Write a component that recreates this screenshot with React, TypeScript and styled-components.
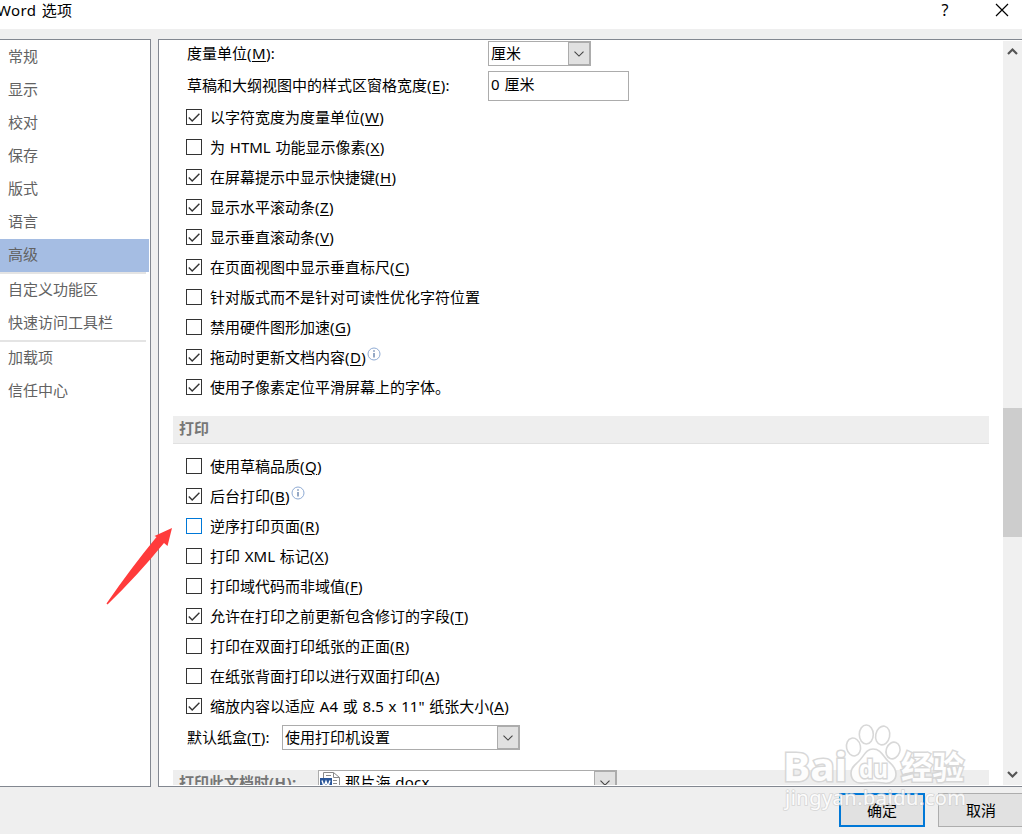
import type { ReactNode } from 'react';
import styled, { createGlobalStyle } from 'styled-components';

const GlobalStyle = createGlobalStyle`
    * {
        box-sizing: border-box;
    }
    body {
        margin: 0;
        overflow: hidden;
        font-family: "Noto Sans", "Noto Sans CJK SC", sans-serif;
        font-size: 15px;
        word-spacing: 0.9px;
        color: #000;
    }
`;

const Dialog = styled.div`
    position: relative;
    display: flex;
    flex-direction: column;
    width: 1022px;
    height: 834px;
    overflow: hidden;
    background-color: #efefef;
`;

const TitleBar = styled.header`
    display: flex;
    align-items: flex-start;
    flex: none;
    height: 29px;
    background-color: #fff;
    h1 {
        flex: 1;
        margin: 0 0 0 -3px;
        font-size: 15px;
        font-weight: 400;
        line-height: 20px;
        letter-spacing: 0.4px;
    }
`;

const TitleButton = styled.button`
    display: flex;
    justify-content: center;
    width: 20px;
    height: 22px;
    padding: 0;
    border: none;
    background: none;
    font: 16px/21px "Noto Sans", sans-serif;
    &:last-child {
        margin: 0 10px 0 37px;
    }
`;

const Body = styled.div`
    display: flex;
    flex: none;
    gap: 7px;
    height: 748px;
    margin-top: 10px;
`;

const Sidebar = styled.nav`
    width: 151px;
    padding-top: 1px;
    border: 1px solid #828790;
    border-left: none;
    background-color: #fff;
`;

const NavItem = styled.div<{ $active?: boolean }>`
    width: 149px;
    height: 33px;
    padding-left: 8px;
    line-height: 31px;
    color: #626262;
    background-color: ${props => props.$active ? '#a5bde3' : 'transparent'};
`;

const NavLine = styled.div`
    width: 146px;
    height: 2px;
    background-color: #e4e4e4;
`;

const Panel = styled.main`
    display: flex;
    flex: 1;
    padding: 1px 0;
    border: 1px solid #828790;
    border-right: none;
    background-color: #fff;
`;

const Content = styled.div`
    flex: 1;
    height: 744px;
    padding: 0 14px;
    overflow: hidden;
`;

const Field = styled.div<{ $height: number; $gap?: number }>`
    display: flex;
    align-items: center;
    height: ${props => props.$height}px;
    margin-top: ${props => props.$gap ?? 0}px;
    padding-left: 14px;
`;

const FieldLabel = styled.label<{ $width: number }>`
    flex: none;
    width: ${props => props.$width}px;
    line-height: 23px;
    padding-bottom: 1px;
    white-space: nowrap;
`;

const Combo = styled.div<{ $width: number }>`
    display: flex;
    flex: none;
    width: ${props => props.$width}px;
    height: 25px;
    border: 1px solid #acacac;
    background-color: #fff;
    font-weight: 400;
    color: #000;
    span {
        flex: 1;
        padding-left: 2px;
        line-height: 23px;
    }
    svg + span {
        padding-left: 4px;
        letter-spacing: 0.3px;
    }
`;

const ComboButton = styled.div`
    display: flex;
    align-items: center;
    justify-content: center;
    width: 22px;
    border: 1px solid #acacac;
    background-color: #e1e1e1;
`;

const TextBox = styled.div`
    width: 141px;
    height: 30px;
    padding-left: 2px;
    border: 1px solid #acacac;
    line-height: 24px;
`;

const CheckRow = styled.label`
    display: flex;
    align-items: center;
    height: 30px;
    padding-left: 13px;
    white-space: nowrap;
`;

const CheckText = styled.span`
    padding-bottom: 2px;
`;

const Box = styled.span<{ $focused?: boolean }>`
    display: block;
    width: 16px;
    height: 16px;
    margin-right: 8px;
    border: 1px solid ${props => props.$focused ? '#0078d7' : '#333'};
    background-color: #fff;
    svg {
        display: block;
    }
`;

const KeyGroup = styled.span`
    letter-spacing: 0.4px;
`;

const Key = styled.span`
    text-decoration: underline;
    text-decoration-thickness: 1px;
    text-underline-offset: 2px;
`;

const InfoIcon = styled.svg`
    margin: -6px 0 0 1px;
`;

const Section = styled.h2<{ $gap: number }>`
    display: flex;
    height: 28px;
    margin: ${props => props.$gap}px 0 0;
    padding-left: 6px;
    border-bottom: 1px solid #e1e1e1;
    background-color: #eee;
    font-size: 15px;
    font-weight: 700;
    line-height: 24px;
    color: #767676;
`;

const SectionLabel = styled.span`
    width: 139px;
`;

const CheckList = styled.div<{ $gap: number }>`
    margin-top: ${props => props.$gap}px;
`;

const Scrollbar = styled.div`
    display: flex;
    flex-direction: column;
    align-items: center;
    width: 19px;
    background-color: #f0f0f0;
    svg {
        flex: none;
    }
`;

const Thumb = styled.div`
    width: 19px;
    height: 129px;
    margin: 347px 0 auto;
    background-color: #cdcdcd;
`;

const Footer = styled.footer`
    display: flex;
    justify-content: flex-end;
    gap: 13px;
    margin: 6px -2px 0 0;
`;

const Button = styled.button<{ $primary?: boolean }>`
    width: 86px;
    height: 34px;
    padding: 0 0 2px;
    border: ${props => props.$primary ? '2px solid #0078d7' : '1px solid #adadad'};
    background-color: #e1e1e1;
    font: inherit;
    color: #000;
`;

const Overlay = styled.svg`
    position: absolute;
    top: 0;
    left: 0;
    pointer-events: none;
    word-spacing: 0;
    text {
        paint-order: stroke;
    }
`;

interface IOption {
    label: string;
    hotkey?: string;
    checked?: boolean;
    focused?: boolean;
    info?: boolean;
}

const navGroups = [
    ['常规', '显示', '校对', '保存', '版式', '语言', '高级'],
    ['自定义功能区', '快速访问工具栏'],
    ['加载项', '信任中心'],
];

const displayOptions: IOption[] = [
    { label: '以字符宽度为度量单位', hotkey: 'W', checked: true },
    { label: '为 HTML 功能显示像素', hotkey: 'X' },
    { label: '在屏幕提示中显示快捷键', hotkey: 'H', checked: true },
    { label: '显示水平滚动条', hotkey: 'Z', checked: true },
    { label: '显示垂直滚动条', hotkey: 'V', checked: true },
    { label: '在页面视图中显示垂直标尺', hotkey: 'C', checked: true },
    { label: '针对版式而不是针对可读性优化字符位置' },
    { label: '禁用硬件图形加速', hotkey: 'G' },
    { label: '拖动时更新文档内容', hotkey: 'D', checked: true, info: true },
    { label: '使用子像素定位平滑屏幕上的字体。', checked: true },
];

const printOptions: IOption[] = [
    { label: '使用草稿品质', hotkey: 'Q' },
    { label: '后台打印', hotkey: 'B', checked: true, info: true },
    { label: '逆序打印页面', hotkey: 'R', focused: true },
    { label: '打印 XML 标记', hotkey: 'X' },
    { label: '打印域代码而非域值', hotkey: 'F' },
    { label: '允许在打印之前更新包含修订的字段', hotkey: 'T', checked: true },
    { label: '打印在双面打印纸张的正面', hotkey: 'R' },
    { label: '在纸张背面打印以进行双面打印', hotkey: 'A' },
    { label: '缩放内容以适应 A4 或 8.5 x 11" 纸张大小', hotkey: 'A', checked: true },
];

function Hotkey({ children }: { children: ReactNode }) {
    return <KeyGroup>(<Key>{children}</Key>)</KeyGroup>;
}

function Option({ label, hotkey, checked, focused, info }: IOption) {
    return (
        <CheckRow>
            <Box $focused={focused}>
                {checked && (
                    <svg width="14" height="14" fill="none" stroke="#333" strokeWidth="1.4">
                        <path d="M1.8 7.5 5.2 10.9 12.4 3.7" />
                    </svg>
                )}
            </Box>
            <CheckText>{label}{hotkey && <Hotkey>{hotkey}</Hotkey>}</CheckText>
            {info && (
                <InfoIcon width="14" height="14" fill="none">
                    <circle cx="7" cy="7" r="6" stroke="#8fabd4" />
                    <path d="M7 6v4.5M7 3.2v1.5" stroke="#4f6f9f" strokeWidth="1.2" />
                </InfoIcon>
            )}
        </CheckRow>
    );
}

function DropDown({ width, children }: { width: number; children: ReactNode }) {
    return (
        <Combo $width={width}>
            {children}
            <ComboButton>
                <svg width="10" height="6" fill="none" stroke="#444" strokeWidth="1.1">
                    <path d="M.5.7 5 5.1 9.5.7" />
                </svg>
            </ComboButton>
        </Combo>
    );
}

function WordIcon() {
    return (
        <svg width="22" height="22" fill="none">
            <path d="M4.5 20V1.5h10l6 5V20z" fill="#fff" stroke="#8a8a8a" />
            <path d="M14.5 1.5v5h6M7 4.5h5M14 9.5h4M14 12.5h4" stroke="#8a8a8a" />
            <rect x="1" y="7" width="12" height="11" fill="#2b579a" />
            <path d="m3 9.5 2 6 2-5 2 5 2-6" stroke="#fff" strokeWidth="1.4" />
        </svg>
    );
}

function Watermark() {
    return (
        <g fill="#fff" stroke="#d2d2d2" strokeWidth="1.6" fontFamily='"Noto Sans", "Noto Sans CJK SC", sans-serif' opacity="0.85">
            <ellipse cx="866.3" cy="734.5" rx="7" ry="9.5" />
            <ellipse cx="882.7" cy="735.5" rx="7" ry="9.5" transform="rotate(12 882.7 735.5)" />
            <ellipse cx="853.5" cy="747" rx="7" ry="9" transform="rotate(-12 853.5 747)" />
            <ellipse cx="893" cy="750.5" rx="6.8" ry="8.5" transform="rotate(20 893 750.5)" />
            <path d="M873 749c8 0 10 7 15 12 5 4 8 8 8 13 0 7-6 10-12 9-7-1-14-1-21 0-7 1-12-3-12-10 0-6 4-8 8-12 5-5 7-12 14-12z" />
            <g strokeWidth="3">
                <text x="783" y="781" fontSize="40" fontWeight="700" textLength="64" lengthAdjust="spacingAndGlyphs">Bai</text>
                <text x="859" y="778" fontSize="25" fontWeight="700" textLength="29" lengthAdjust="spacingAndGlyphs">du</text>
                <text x="901" y="779" fontSize="32" fontWeight="700" textLength="63" lengthAdjust="spacingAndGlyphs">经验</text>
            </g>
            <text x="785" y="805" fontSize="20" strokeWidth="1.6" textLength="181">jingyan.baidu.com</text>
        </g>
    );
}

function App() {
    return (
        <Dialog>
            <GlobalStyle />
            <TitleBar>
                <h1>Word 选项</h1>
                <TitleButton>?</TitleButton>
                <TitleButton>
                    <svg width="14" height="22" fill="none" stroke="#000" strokeWidth="1.2">
                        <path d="m1 4 12 12M13 4 1 16" />
                    </svg>
                </TitleButton>
            </TitleBar>
            <Body>
                <Sidebar>
                    {navGroups.map((group, i) => (
                        <div key={i}>
                            {i > 0 && <NavLine />}
                            {group.map(name => <NavItem key={name} $active={name === '高级'}>{name}</NavItem>)}
                        </div>
                    ))}
                </Sidebar>
                <Panel>
                    <Content>
                        <Field $height={25}>
                            <FieldLabel $width={301}>度量单位<Hotkey>M</Hotkey>:</FieldLabel>
                            <DropDown width={103}><span>厘米</span></DropDown>
                        </Field>
                        <Field $height={30} $gap={5}>
                            <FieldLabel $width={301}>草稿和大纲视图中的样式区窗格宽度<Hotkey>E</Hotkey>:</FieldLabel>
                            <TextBox>0 厘米</TextBox>
                        </Field>
                        <CheckList $gap={1}>
                            {displayOptions.map(option => <Option key={option.label} {...option} />)}
                        </CheckList>
                        <Section $gap={14}>打印</Section>
                        <CheckList $gap={7}>
                            {printOptions.map(option => <Option key={option.label} {...option} />)}
                        </CheckList>
                        <Field $height={25} $gap={4}>
                            <FieldLabel $width={95}>默认纸盒<Hotkey>T</Hotkey>:</FieldLabel>
                            <DropDown width={238}><span>使用打印机设置</span></DropDown>
                        </Field>
                        <Section $gap={20}>
                            <SectionLabel>打印此文档时<Hotkey>H</Hotkey>:</SectionLabel>
                            <DropDown width={299}>
                                <WordIcon />
                                <span>那片海.docx</span>
                            </DropDown>
                        </Section>
                    </Content>
                    <Scrollbar>
                        <svg width="19" height="20" fill="none" stroke="#555" strokeWidth="2.2">
                            <path d="M5 13 9.5 8.5 14 13" />
                        </svg>
                        <Thumb />
                        <svg width="19" height="20" fill="none" stroke="#555" strokeWidth="2.2">
                            <path d="m5 7 4.5 4.5L14 7" />
                        </svg>
                    </Scrollbar>
                </Panel>
            </Body>
            <Footer>
                <Button $primary>确定</Button>
                <Button>取消</Button>
            </Footer>
            <Overlay width="1022" height="834">
                <path d="M106.5 603.5Q131 568 156.5 537l-2-1 17.5-8-4.5 18-3.5-3Q138 575 107.5 604.5z" fill="#ff3b3b" />
                <Watermark />
            </Overlay>
        </Dialog>
    );
}

export default App;
